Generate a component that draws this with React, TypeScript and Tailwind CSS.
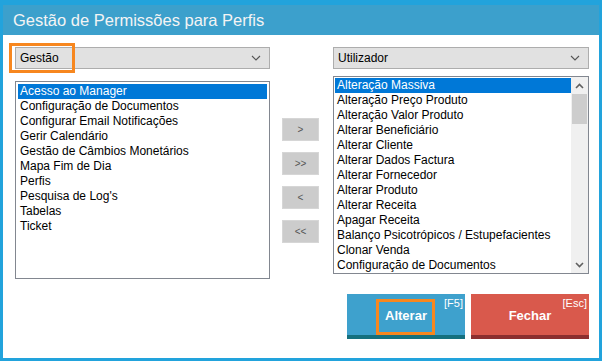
import React from "react";

const left = [
  "Acesso ao Manager",
  "Configuração de Documentos",
  "Configurar Email Notificações",
  "Gerir Calendário",
  "Gestão de Câmbios Monetários",
  "Mapa Fim de Dia",
  "Perfis",
  "Pesquisa de Log's",
  "Tabelas",
  "Ticket",
];

const right = [
  "Alteração Massiva",
  "Alteração Preço Produto",
  "Alteração Valor Produto",
  "Alterar Beneficiário",
  "Alterar Cliente",
  "Alterar Dados Factura",
  "Alterar Fornecedor",
  "Alterar Produto",
  "Alterar Receita",
  "Apagar Receita",
  "Balanço Psicotrópicos / Estupefacientes",
  "Clonar Venda",
  "Configuração de Documentos",
];

const font = { fontFamily: '"Liberation Sans", Arial, sans-serif' };

const Chevron = () => (
  <svg width="10" height="6" viewBox="0 0 10 6" className="mr-[8px]">
    <path d="M1 1 L5 5 L9 1" fill="none" stroke="#555" strokeWidth="1.1" />
  </svg>
);

const Select = ({ label }: { label: string }) => (
  <div className="h-[22px] bg-[#e1e1e1] border border-[#adadad] flex items-center justify-between pl-[4px] text-[12px] text-black">
    <span>{label}</span>
    <Chevron />
  </div>
);

const Row = ({ text, active }: { text: string; active?: boolean }) => (
  <div
    className={`h-[15px] leading-[14px] pl-[2px] whitespace-nowrap text-[12px] ${
      active ? "bg-[#0078d7] text-white" : "text-black"
    }`}
  >
    {text}
  </div>
);

const MoveBtn = ({ label }: { label: string }) => (
  <div className="w-[37px] h-[23px] bg-[#cccccc] border border-[#d6d6d6] flex items-center justify-center text-[10px] text-[#555]">
    {label}
  </div>
);

export default function App() {
  return (
    <div
      style={font}
      className="w-[602px] h-[361px] bg-[#22a3dc] pt-[5px] pl-[3px] pr-[3px] pb-[3px]"
    >
      <div className="w-full h-full bg-white flex flex-col">
        {/* header */}
        <div className="h-[30px] bg-[#3ca0cc] flex items-center pl-[10px] text-[16.5px] text-[#f4f4f4]">
          Gestão de Permissões para Perfis
        </div>

        <div className="flex pl-[12px] pt-[12px]">
          {/* left column */}
          <div className="w-[255px] flex flex-col">
            <div className="relative">
              <Select label="Gestão" />
              <div className="absolute left-[-6px] top-[-4px] w-[66px] h-[30px] border-[3px] border-[#f7871f]" />
            </div>
            <div className="mt-[12px] h-[198px] border border-[#828790] p-[2px] pl-[2px]">
              {left.map((t, i) => (
                <Row key={t} text={t} active={i === 0} />
              ))}
            </div>
          </div>

          {/* move buttons */}
          <div className="ml-[12px] pt-[71px] flex flex-col gap-[11px]">
            <MoveBtn label=">" />
            <MoveBtn label=">>" />
            <MoveBtn label="<" />
            <MoveBtn label="<<" />
          </div>

          {/* right column */}
          <div className="ml-[14px] w-[256px] flex flex-col">
            <Select label="Utilizador" />
            <div className="mt-[7px] h-[198px] border border-[#828790] flex">
              <div className="flex-1 pt-[1px] pl-[1px] overflow-hidden">
                {right.map((t, i) => (
                  <Row key={t} text={t} active={i === 0} />
                ))}
              </div>
              <div className="w-[17px] bg-[#f0f0f0] flex flex-col items-center">
                <div className="h-[17px] flex items-center justify-center">
                  <svg width="9" height="6" viewBox="0 0 9 6">
                    <path d="M1 5 L4.5 1.5 L8 5" fill="none" stroke="#606060" strokeWidth="1.6" />
                  </svg>
                </div>
                <div className="w-[15px] h-[30px] bg-[#cdcdcd]" />
                <div className="flex-1" />
                <div className="h-[17px] flex items-center justify-center">
                  <svg width="9" height="6" viewBox="0 0 9 6">
                    <path d="M1 1 L4.5 4.5 L8 1" fill="none" stroke="#606060" strokeWidth="1.6" />
                  </svg>
                </div>
              </div>
            </div>
          </div>
        </div>

        {/* action buttons */}
        <div className="flex justify-end gap-[6px] pr-[10px] mt-[15px]">
          <div className="relative w-[118px] h-[45px] bg-[#3ea1cd] border-b-[4px] border-[#15707e] flex items-center justify-center text-white">
            <span className="absolute right-[2px] top-[1px] text-[11px]">[F5]</span>
            <span className="text-[13px] font-bold mt-[2px]">Alterar</span>
            <div className="absolute left-[29px] top-[5px] w-[59px] h-[36px] border-[3px] border-[#f7871f]" />
          </div>
          <div className="relative w-[118px] h-[45px] bg-[#d9594c] border-b-[4px] border-[#8c2f2f] flex items-center justify-center text-white">
            <span className="absolute right-[2px] top-[1px] text-[11px]">[Esc]</span>
            <span className="text-[13px] font-bold mt-[2px]">Fechar</span>
          </div>
        </div>
      </div>
    </div>
  );
}
